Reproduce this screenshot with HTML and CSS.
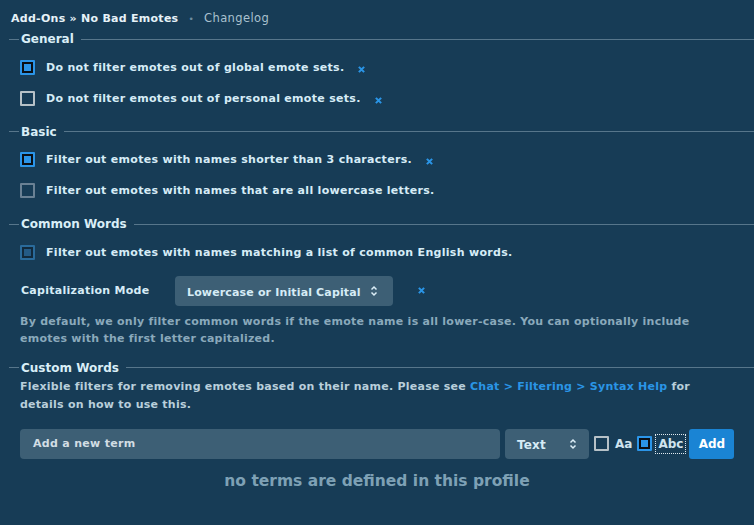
FILE: index.html
```html
<!DOCTYPE html>
<html>
<head>
<meta charset="utf-8">
<link rel="stylesheet" href="styles.css">
</head>
<body>
<div class="page">
  <div class="crumbs"><b>Add-Ons » No Bad Emotes</b><span class="dot">•</span><span class="link">Changelog</span></div>

  <div class="legend first"><span>General</span></div>
  <div class="row"><span class="cb on"></span><span class="lbl">Do not filter emotes out of global emote sets.</span><svg class="x" viewBox="0 0 8 8"><path d="M1 1L7 7M7 1L1 7"/></svg></div>
  <div class="row"><span class="cb light"></span><span class="lbl">Do not filter emotes out of personal emote sets.</span><svg class="x" viewBox="0 0 8 8"><path d="M1 1L7 7M7 1L1 7"/></svg></div>

  <div class="legend"><span>Basic</span></div>
  <div class="row"><span class="cb on"></span><span class="lbl">Filter out emotes with names shorter than 3 characters.</span><svg class="x" viewBox="0 0 8 8"><path d="M1 1L7 7M7 1L1 7"/></svg></div>
  <div class="row"><span class="cb"></span><span class="lbl">Filter out emotes with names that are all lowercase letters.</span></div>

  <div class="legend"><span>Common Words</span></div>
  <div class="row"><span class="cb dim"></span><span class="lbl">Filter out emotes with names matching a list of common English words.</span></div>
  <div class="selrow">
    <span class="sellbl">Capitalization Mode</span>
    <div class="select wide">Lowercase or Initial Capital<svg class="arr" viewBox="0 0 8 12"><path d="M1.5 4.5L4 2L6.5 4.5M1.5 7.5L4 10L6.5 7.5"/></svg></div>
    <svg class="x" viewBox="0 0 8 8"><path d="M1 1L7 7M7 1L1 7"/></svg>
  </div>
  <p class="desc">By default, we only filter common words if the emote name is all lower-case. You can optionally include emotes with the first letter capitalized.</p>

  <div class="legend custom"><span>Custom Words</span></div>
  <p class="cdesc">Flexible filters for removing emotes based on their name. Please see <span class="a">Chat &gt; Filtering &gt; Syntax Help</span> for details on how to use this.</p>

  <div class="addrow">
    <div class="input">Add a new term</div>
    <div class="select small">Text<svg class="arr" viewBox="0 0 8 12"><path d="M1.5 4.5L4 2L6.5 4.5M1.5 7.5L4 10L6.5 7.5"/></svg></div>
    <span class="cb light"></span><span class="opt">Aa</span>
    <span class="cb on"></span><span class="opt focus">Abc</span>
    <div class="btn">Add</div>
  </div>
  <div class="empty">no terms are defined in this profile</div>
</div>
</body>
</html>
```
FILE: styles.css
```css
html, body {
  margin: 0;
  padding: 0;
  background: #173c56;
}
body {
  width: 754px;
  height: 525px;
  overflow: hidden;
  font-family: "DejaVu Sans", Verdana, sans-serif;
  font-size: 11px;
  color: #d6ecf6;
}
.page {
  padding: 11px 0 0 0;
}
.crumbs {
  padding-left: 11px;
  height: 15px;
  line-height: 15px;
  color: #e6f2f8;
  letter-spacing: 0.27px;
}
.crumbs b { font-weight: bold; }
.crumbs .dot { color: #6f8da0; margin: 0 10px 0 10px; font-size: 9px; }
.crumbs .link { color: #a9c1cf; font-size: 11.5px; letter-spacing: 0.4px; }

.legend {
  display: flex;
  align-items: center;
  height: 18px;
  margin: 9px 0 0 0;
  font-size: 12px;
  color: #d9eef7;
  font-weight: 600;
}
.legend.first { margin-top: 4px; }
.legend::before {
  content: "";
  width: 10px;
  height: 1px;
  background: #57768b;
  margin-right: 1px;
  margin-left: 9px;
}
.legend::after {
  content: "";
  flex: 1;
  height: 1px;
  background: #57768b;
  margin-left: 6px;
}
.legend span { padding: 0 1px; }

.row {
  display: flex;
  align-items: center;
  height: 31px;
  padding-left: 20px;
}
.legend + .row { margin-top: 3.5px; }
.lbl {
  margin-left: 11px;
  font-weight: 600;
  letter-spacing: 0.3px;
}
.cb {
  width: 15px;
  height: 15px;
  box-sizing: border-box;
  border: 2px solid #6a8194;
  border-radius: 1px;
  flex: none;
}
.cb.light { border-color: #b6c1c7; }
.cb.on {
  border-color: #2b95e8;
  background: #2b95e8;
  box-shadow: inset 0 0 0 2px #0b0f14;
}
.cb.dim {
  border-color: #2a6b9b;
  background: #245b86;
  box-shadow: inset 0 0 0 2px #122a3c;
}
.x {
  width: 7px;
  height: 7px;
  margin-left: 14px;
  margin-top: 4px;
  fill: none;
  stroke: #2a95e6;
  stroke-width: 2.4;
}
.selrow {
  display: flex;
  align-items: center;
  margin-top: 8px;
  padding-left: 21px;
  height: 30px;
}
.sellbl {
  width: 154px;
  font-weight: 600;
  letter-spacing: 0.27px;
}
.select {
  height: 30px;
  box-sizing: border-box;
  background: #3d5f75;
  border-radius: 4px;
  display: flex;
  align-items: center;
  color: #d6ecf6;
  font-weight: 600;
  font-size: 11px;
  letter-spacing: 0.15px;
}
.select.wide {
  width: 218px;
  padding-left: 12px;
  padding-top: 3px;
}
.select .arr {
  width: 8px;
  height: 12px;
  fill: none;
  stroke: #dceef7;
  stroke-width: 1.5;
  margin-left: 9px;
  margin-top: -3px;
}
.selrow .x { margin-left: 25px; margin-top: 0; }
.desc {
  margin: 7px 0 0 0;
  padding: 0 20px;
  line-height: 17px;
  color: #8aa9bb;
  font-weight: 600;
  letter-spacing: 0.25px;
}
.legend.custom {
  margin-top: 12px;
}
.cdesc {
  margin: 1px 0 0 0;
  padding: 0 20px;
  line-height: 18px;
  font-weight: 600;
  letter-spacing: 0.25px;
  color: #b9cfdb;
}
.cdesc .a { color: #2a95e6; }

.addrow {
  display: flex;
  align-items: center;
  margin-top: 15px;
  padding-left: 20px;
  height: 30px;
}
.input {
  width: 480px;
  height: 30px;
  box-sizing: border-box;
  background: #3d5f75;
  border-radius: 4px;
  padding-left: 13px;
  line-height: 30px;
  color: #d2dde4;
  font-weight: 600;
  font-size: 11px;
  letter-spacing: 0.3px;
}
.select.small {
  width: 84px;
  margin-left: 5px;
  padding-left: 12px;
  padding-top: 3px;
  font-size: 12px;
}
.select.small .arr { margin-left: 23px; }
.addrow .cb { margin-left: 5px; }
.opt {
  margin-left: 6px;
  font-weight: 600;
  font-size: 12px;
  color: #cfe3ee;
}
.opt.focus {
  outline: 1px dotted #dfe9ef;
  outline-offset: 2px;
  margin-left: 6px;
  padding: 0;
}
.btn {
  margin-left: 6px;
  width: 45px;
  height: 30px;
  background: #1a84d4;
  border-radius: 3px;
  color: #fff;
  font-weight: bold;
  font-size: 12px;
  display: flex;
  align-items: center;
  justify-content: center;
}
.empty {
  text-align: center;
  margin-top: 13px;
  font-size: 15.5px;
  line-height: 19px;
  color: #7ea1b5;
  font-weight: 600;
}
```
